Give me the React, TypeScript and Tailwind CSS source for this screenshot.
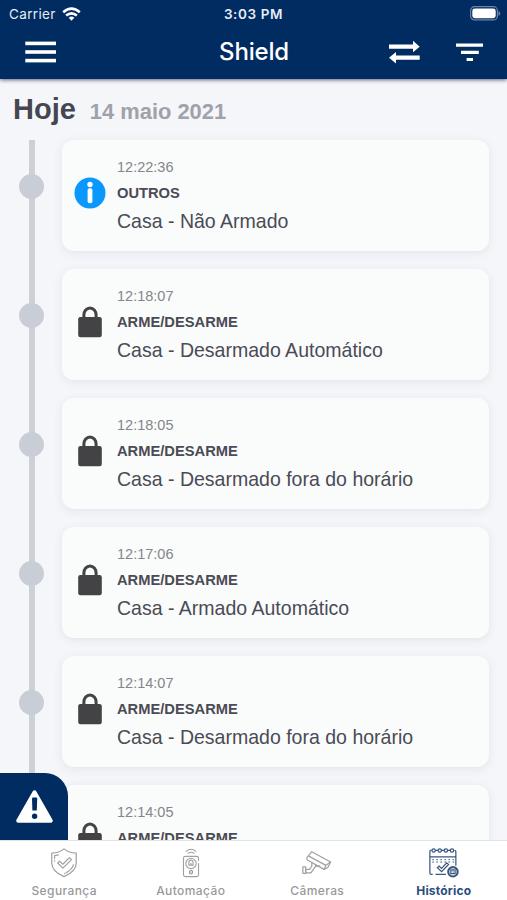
import type { ReactNode } from "react";

type Entry = { time: string; kind: string; text: string; info?: boolean };

const entries: Entry[] = [
  { time: "12:22:36", kind: "OUTROS", text: "Casa - Não Armado", info: true },
  { time: "12:18:07", kind: "ARME/DESARME", text: "Casa - Desarmado Automático" },
  { time: "12:18:05", kind: "ARME/DESARME", text: "Casa - Desarmado fora do horário" },
  { time: "12:17:06", kind: "ARME/DESARME", text: "Casa - Armado Automático" },
  { time: "12:14:07", kind: "ARME/DESARME", text: "Casa - Desarmado fora do horário" },
  { time: "12:14:05", kind: "ARME/DESARME", text: "Casa - Desarmado fora do horário" },
];

function StatusBar() {
  return (
    <div className="grid h-7 grid-cols-3 items-center pl-[9px] pr-[6px] font-['Inter',sans-serif] text-[13.500px] text-[#e8edf5]">
      <div className="flex items-center gap-[6px]">
        <span className="tracking-[0.350px]">Carrier</span>
        <svg width="19" height="15" viewBox="0 0 19 15" fill="none" stroke="#fff" strokeWidth="2.600">
          <path d="M1.200 5.300Q9.500-2 17.800 5.300" />
          <path d="M4.100 8.600Q9.500 4 14.900 8.600" />
          <path d="M6.700 10.700Q9.500 8.300 12.300 10.700L9.500 13.700Z" fill="#fff" stroke="none" />
        </svg>
      </div>
      <span className="-ml-[3px] text-center font-semibold tracking-[0.600px]">3:03 PM</span>
      <svg className="mb-[2px] justify-self-end" width="31" height="15" viewBox="0 0 31 15">
        <rect x="0.600" y="0.700" width="26.800" height="13.200" rx="4" fill="none" stroke="#6d84a8" strokeWidth="1.200" />
        <rect x="2.300" y="2.600" width="23.400" height="9.600" rx="2.400" fill="#fff" />
        <path d="M28.500 5v5q1.800-.8 1.800-2.500T28.500 5Z" fill="#6d84a8" />
      </svg>
    </div>
  );
}

function Header() {
  return (
    <header className="relative z-10 h-[79px] shrink-0 bg-[#012c62] shadow-[0_1px_4px_rgba(20,20,50,0.65)]">
      <StatusBar />
      <div className="grid h-12 grid-cols-3 items-center pl-[25px] pr-[24px]">
        <svg width="32" height="22" viewBox="0 0 32 22" fill="#fff">
          <rect x="0.300" y="0.600" width="30.700" height="3.600" />
          <rect x="0.300" y="9.200" width="30.700" height="3.600" />
          <rect x="0.300" y="17.800" width="30.700" height="3.600" />
        </svg>
        <h1 className="text-center font-['Inter',sans-serif] text-[24px] font-medium leading-none tracking-[-0.200px] text-white">Shield</h1>
        <div className="flex items-center justify-end gap-[36px]">
          <svg width="32" height="24" viewBox="0 0 32 24" fill="#fff">
            <path d="M1 4.500H25V.8L31.700 6.700 25 12.300V8.700H1ZM31.700 15.500H8V11.900L1 17.700 8 23.400V19.700H31.700Z" />
          </svg>
          <svg width="27" height="19" viewBox="0 0 27 19" fill="#fff">
            <path d="M0 .5H27V3.700H0ZM5 7.700H22.800V10.900H5ZM10.600 14.900H17V18.100H10.600Z" />
          </svg>
        </div>
      </div>
    </header>
  );
}

function InfoIcon() {
  return (
    <svg width="32" height="32" viewBox="0 0 32 32">
      <circle cx="16" cy="16" r="15.500" fill="#0a98fc" />
      <circle cx="16" cy="7.500" r="2.700" fill="#fff" />
      <rect x="13.600" y="11.300" width="4.800" height="15" rx="2" fill="#fff" />
    </svg>
  );
}

function LockIcon() {
  return (
    <svg width="32" height="32" viewBox="0 0 32 32">
      <path d="M9.900 13V8.900a6.100 7 0 0 1 12.200 0V13" fill="none" stroke="#434345" strokeWidth="3" />
      <rect x="4.200" y="11" width="23.600" height="20.300" rx="2.200" fill="#434345" />
    </svg>
  );
}

function TimelineRow({ time, kind, text, info }: Entry) {
  return (
    <li className="flex h-[129px] shrink-0">
      <div className="relative flex w-[62px] shrink-0 justify-center">
        <span className="ml-[1px] h-full w-[6px] bg-[#cdd0d5]" />
        <span className="absolute left-[19px] top-[34px] size-[25px] rounded-full bg-[#c9cdd6]" />
      </div>
      <article className="flex h-[111px] w-[427px] rounded-[12px] bg-[#fafbfb] pl-[11.500px] shadow-[0_2px_10px_rgba(70,80,90,0.10)]">
        <div className="w-[43.500px] shrink-0 pt-[37px]">{info ? <InfoIcon /> : <LockIcon />}</div>
        <div className="pt-[18px] text-[#4a4b55]">
          <p className="text-[14.500px] leading-[19px] text-[#85868b]">{time}</p>
          <p className="mt-[6px] text-[14.700px] font-bold leading-[20px]">{kind}</p>
          <p className="mt-[6px] whitespace-nowrap text-[19.530px] leading-[24px]">{text}</p>
        </div>
      </article>
    </li>
  );
}

function ShieldIcon() {
  return (
    <svg width="34" height="34" viewBox="0 0 34 34" fill="none" stroke="#a0a1a3" strokeWidth="1.300" strokeLinejoin="round" strokeLinecap="round">
      <path d="M17 2C13.500 5 9 6.400 4 6.500V17c0 7 6 11.500 13 14.500C24 28.500 30 24 30 17V6.500C25 6.400 20.500 5 17 2Z" />
      <path d="m10.300 17 2-2 3.500 3.300 7-7 2.200 2.100-9.200 9.100Z" />
      <path d="M7 12V9.200l4-.8M7 14.500v.5M27 19c-1 4-4 6.300-7.500 8.200M17.500 28.200l.5-.2" />
    </svg>
  );
}

function DeviceIcon() {
  return (
    <svg width="34" height="34" viewBox="0 0 34 34" fill="none" stroke="#a0a1a3" strokeWidth="1.200" strokeLinecap="round">
      <path d="M11.800 4.600q5.200-4.400 10.400 0M14 6.700q3-2.200 6 0" />
      <path d="M25 17.500V29.500a2 2 0 0 1-2 2H11a2 2 0 0 1-2-2V12a2 2 0 0 1 2-2H23a2 2 0 0 1 2 2v2" />
      <circle cx="17" cy="17.500" r="5.500" />
      <path d="M14.800 19.300V16.200a2.200 2.200 0 0 1 4.400 0v3.100Zm2.200-2v2" />
      <circle cx="17" cy="26.700" r="1.800" />
      <path d="M17 26.300v.6" />
    </svg>
  );
}

function CameraIcon() {
  return (
    <svg width="34" height="34" viewBox="0 0 34 34" fill="none" stroke="#a0a1a3" strokeWidth="1.300" strokeLinejoin="round" strokeLinecap="round">
      <path d="M11.500 5 31.500 16 28.500 21.800 24.500 23.800 6.800 13.800Q5.500 12.500 6.500 11Z" />
      <path d="M8.300 9.700 26.500 19.500 31.500 16M26.500 19.500l-2 4.300M11.500 16.700v3.500l-2.500 3.500H5v3.800h5.500l5-6.800v-1.500M15.500 20.500l4.500-.5" />
      <path d="M2 21h3v7H2Z" />
    </svg>
  );
}

function HistoryIcon() {
  return (
    <svg width="34" height="34" viewBox="0 0 34 34" fill="none" stroke="#38577f" strokeWidth="1.300">
      <path d="M3.600 3.500H2.500Q2 3.500 2 5V27.500Q2 29 3.500 29H5M8 29H19M29.600 20V5Q29.600 3.500 28.200 3.500M2 10.500H29.600" />
      <g fill="#fff">
        <circle cx="6" cy="3.700" r="1.800" /><circle cx="12.500" cy="3.700" r="1.800" />
        <circle cx="19" cy="3.700" r="1.800" /><circle cx="25.500" cy="3.700" r="1.800" />
      </g>
      <path d="M8 3.700h2.600M14.500 3.700h2.600M21 3.700h2.600" />
      <path d="M4.500 13.500H28M4.500 16H28" strokeWidth="1" strokeDasharray="1.800 2.500" />
      <path d="m10 22 1.800-1.700 2.600 2.400 5.500-5.800 1.900 1.700-7.300 7.700Z" />
      <circle cx="26.500" cy="26.300" r="5" fill="#fff" strokeWidth="2.300" />
      <path d="M24.300 24.200h4.500v4.200h-4.500Z" fill="#fff" />
      <path d="M26.500 25v1.700h1.200" strokeWidth="0.700" />
    </svg>
  );
}

function Tab({ label, icon, active = false }: { label: string; icon: ReactNode; active?: boolean }) {
  return (
    <button className="flex w-[126.500px] shrink-0 flex-col items-center pt-[6px]">
      {icon}
      <span className={active ? "mt-[3px] text-[12px] font-bold leading-[18px] tracking-[0.200px] text-[#294d7c]" : "mt-[3px] text-[12px] font-medium leading-[18px] tracking-[0.400px] text-[#98999b]"}>{label}</span>
    </button>
  );
}

export default function App() {
  return (
    <div className="relative flex h-[900px] w-[507px] flex-col overflow-hidden bg-[#f4f6fa] font-['Liberation_Sans',Arial,sans-serif]">
      <Header />
      <main className="min-h-0 flex-1 overflow-hidden">
        <div className="flex h-[61px] items-baseline gap-[14px] pl-[13px] pt-[11px] font-bold">
          <h2 className="text-[29px] leading-[38px] text-[#454650]">Hoje</h2>
          <span className="text-[21.900px] text-[#9fa2a9]">14 maio 2021</span>
        </div>
        <ul className="flex flex-col">
          {entries.map((entry) => <TimelineRow key={entry.time} {...entry} />)}
        </ul>
      </main>
      <button className="absolute bottom-[60px] left-0 flex h-[67px] w-[68px] items-start rounded-tr-[23px] bg-[#012c62] pl-[15px] pt-[16px]" aria-label="Alerta">
        <svg width="39" height="36" viewBox="0 0 39 36">
          <path d="M19.500 3.300 35.800 31.700H3.200Z" fill="#fff" stroke="#fff" strokeWidth="4" strokeLinejoin="round" />
          <path d="M17 9.500Q17 8.500 18 8.500h3.200q1 0 1 1L21.800 21.500h-4.400Z" fill="#012c62" />
          <circle cx="19.600" cy="27.300" r="2.700" fill="#012c62" />
        </svg>
      </button>
      <nav className="z-10 flex h-[60px] shrink-0 border-t border-[#e2e3e5] bg-white pl-[1px] font-['Inter',sans-serif]">
        <Tab label="Segurança" icon={<ShieldIcon />} />
        <Tab label="Automação" icon={<DeviceIcon />} />
        <Tab label="Câmeras" icon={<CameraIcon />} />
        <Tab label="Histórico" icon={<HistoryIcon />} active />
      </nav>
    </div>
  );
}
